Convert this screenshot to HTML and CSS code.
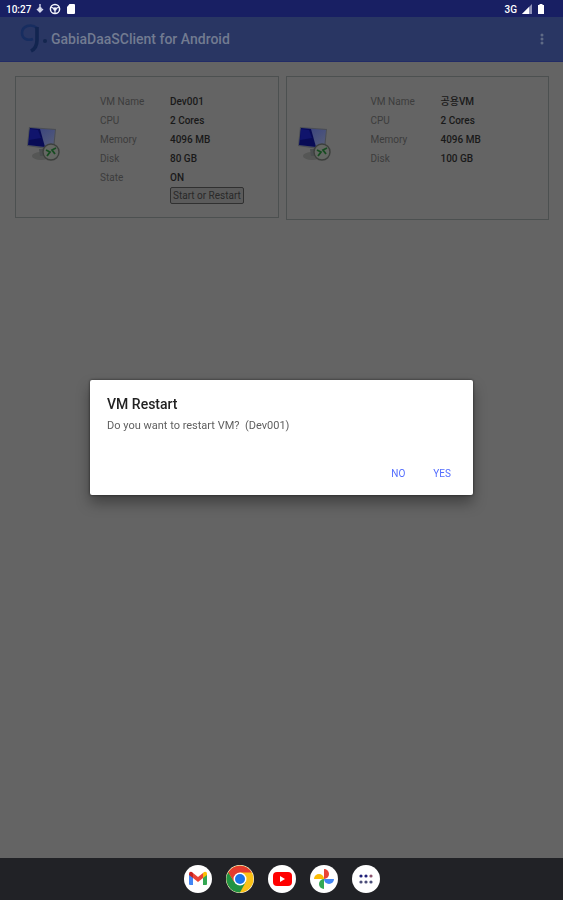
FILE: index.html
```
<!DOCTYPE html>
<html lang="en">

<head>
    <meta charset="UTF-8">
    <title>GabiaDaaSClient for Android</title>
    <meta name="viewport" content="width=device-width, initial-scale=1.0">
    <link rel="stylesheet" href="styles.css">
</head>

<body>

    <!-- shared icon of a virtual machine -->
    <svg class="defs" width="0" height="0" aria-hidden="true">
        <defs>
            <linearGradient id="screen" x1="0" y1="0" x2="1" y2="1">
                <stop offset="0" stop-color="#343e80" />
                <stop offset="1" stop-color="#596078" />
            </linearGradient>
            <symbol id="vm" viewBox="0 0 36 36">
                <ellipse cx="15" cy="30" rx="9" ry="4" fill="#555655" />
                <path d="M13 23h8l1 7h-8z" fill="#4b4e50" />
                <path d="M3 1l27 2-2 21L1 20z" fill="#4a4d54" />
                <path d="M4 2l25 2-2 18L2 19z" fill="url(#screen)" />
                <path d="M4 2l10 1 5 18L2 19z" fill="#080b55" />
                <path d="M4 3l8 1 3 8L3 14z" fill="#10146c" />
                <circle cx="25" cy="26" r="8" fill="#646763" stroke="#3d403d" stroke-width="1.4" />
                <path d="M20 24l4 2-3 4M30 22l-4 2 3 4" fill="none" stroke="#174c21" stroke-width="1.8" />
            </symbol>
        </defs>
    </svg>

    <div class="status-bar">
        <span class="clock">10:27</span>
        <svg width="8" height="10" viewBox="0 0 8 10"><path d="M4 0v7M1 5l3 3 3-3" fill="none" stroke="#d5d8ed" stroke-width="1.4" /><circle cx="4" cy="5" r="2" fill="#d5d8ed" /></svg>
        <svg width="12" height="12" viewBox="0 0 12 12"><circle cx="6" cy="6" r="4.6" fill="none" stroke="#f2f3fa" stroke-width="1.5" /><circle cx="6" cy="6" r="1.8" fill="#f2f3fa" /><path d="M2 4l4 2 4-2M6 6v5" fill="none" stroke="#f2f3fa" stroke-width="1.2" /></svg>
        <svg width="10" height="12" viewBox="0 0 10 12"><path d="M3.500 1H8q1 0 1 1v8q0 1-1 1H2q-1 0-1-1V4z" fill="#fff" /></svg>
        <span class="network">3G</span>
        <svg width="10" height="10" viewBox="0 0 10 10"><path d="M0 10L10 0v10z" fill="#8e91b8" /><path d="M0 10L7 3v7z" fill="#fff" /></svg>
        <svg width="8" height="12" viewBox="0 0 8 12"><path d="M2.500 1h3v1H7v9H1V2h1.500z" fill="#fff" /></svg>
    </div>

    <header class="app-bar">
        <svg class="logo" width="28" height="30" viewBox="0 0 28 30">
            <path d="M17 4C11-1 2 2 2 9c0 6 6 8 11 6" fill="none" stroke="#172d60" stroke-width="2.600" />
            <path d="M17 3v13q0 8-6 11" fill="none" stroke="#122550" stroke-width="3.600" />
            <circle cx="25" cy="17" r="2" fill="#13264f" />
        </svg>
        <h1>GabiaDaaSClient for Android</h1>
        <button class="menu" aria-label="More options">
            <svg width="4" height="14" viewBox="0 0 4 14" fill="#5f6b86"><circle cx="2" cy="3" r="1.500" /><circle cx="2" cy="7" r="1.500" /><circle cx="2" cy="11" r="1.500" /></svg>
        </button>
    </header>

    <main class="machines">
        <section class="card">
            <svg class="vm-icon" width="36" height="36"><use href="#vm" /></svg>
            <dl>
                <dt>VM Name</dt>
                <dd>Dev001</dd>
                <dt>CPU</dt>
                <dd>2 Cores</dd>
                <dt>Memory</dt>
                <dd>4096 MB</dd>
                <dt>Disk</dt>
                <dd>80 GB</dd>
                <dt>State</dt>
                <dd>ON</dd>
                <dd class="action"><button class="btn-restart">Start or Restart</button></dd>
            </dl>
        </section>

        <section class="card card-shared">
            <svg class="vm-icon" width="36" height="36"><use href="#vm" /></svg>
            <dl>
                <dt>VM Name</dt>
                <dd>공용VM</dd>
                <dt>CPU</dt>
                <dd>2 Cores</dd>
                <dt>Memory</dt>
                <dd>4096 MB</dd>
                <dt>Disk</dt>
                <dd>100 GB</dd>
            </dl>
        </section>
    </main>

    <nav class="dock">
        <button aria-label="Gmail">
            <svg width="28" height="28" viewBox="0 0 28 28">
                <path d="M5 9v10q0 1 1 1h3v-8z" fill="#4285f4" />
                <path d="M23 9v10q0 1-1 1h-3v-8z" fill="#34a853" />
                <path d="M5 9q0-3 3-2l1 1v5l-4-3z" fill="#c5221f" />
                <path d="M23 9q0-3-3-2l-1 1v5l4-3z" fill="#fbbc04" />
                <path d="M9 8l5 4 5-4v5l-5 4-5-4z" fill="#ea4335" />
            </svg>
        </button>
        <button aria-label="Chrome">
            <svg width="28" height="28" viewBox="0 0 28 28">
                <circle cx="14" cy="14" r="13.500" fill="#fbc116" />
                <path d="M14 14L8.400 17.200 2.300 7.200A13.500 13.500 0 0 0 14 27.500L19.600 17.200z" fill="#229342" />
                <path d="M2.300 7.200A13.500 13.500 0 0 1 25.700 7.600H14L8.400 17.200z" fill="#e33b2e" />
                <circle cx="14" cy="14" r="6.500" fill="#fff" />
                <circle cx="14" cy="14" r="5" fill="#1a73e8" />
            </svg>
        </button>
        <button aria-label="YouTube">
            <svg width="28" height="28" viewBox="0 0 28 28"><rect x="5" y="7" width="19" height="14" rx="4" fill="#f00" /><path d="M12 11l5 3-5 3z" fill="#fff" /></svg>
        </button>
        <button aria-label="Photos">
            <svg width="28" height="28" viewBox="0 0 28 28">
                <path d="M14 4a5 5 0 0 1 0 10z" fill="#ea4335" />
                <path d="M24 14a5 5 0 0 1-10 0z" fill="#4285f4" />
                <path d="M14 24a5 5 0 0 1 0-10z" fill="#34a853" />
                <path d="M4 14a5 5 0 0 1 10 0z" fill="#fbbc04" />
            </svg>
        </button>
        <button aria-label="All apps">
            <svg width="28" height="28" viewBox="0 0 28 28" fill="#4b4e79"><g fill="#20217a"><circle cx="9" cy="11" r="1.600" /><circle cx="14" cy="11" r="1.600" /></g><circle cx="19" cy="11" r="1.600" fill="#8d5670" /><circle cx="9" cy="17" r="1.600" /><circle cx="14" cy="17" r="1.600" /><circle cx="19" cy="17" r="1.600" /></svg>
        </button>
    </nav>

    <div class="overlay">
        <div class="dialog" role="dialog" aria-labelledby="dialogTitle">
            <h2 id="dialogTitle">VM Restart</h2>
            <p>Do you want to restart VM?&nbsp; (Dev001)</p>
            <div class="buttons">
                <button>NO</button>
                <button>YES</button>
            </div>
        </div>
    </div>

</body>

</html>
```
FILE: styles.css
```
* {
    box-sizing: border-box;
}

body {
    display: flex;
    flex-direction: column;
    min-height: 100vh;
    margin: 0;
    font-family: Roboto, "Noto Sans CJK KR", sans-serif;
    font-size: 10px;
    background: #646464;
}

button {
    padding: 0;
    border: none;
    background: none;
    font-family: inherit;
    cursor: pointer;
}

svg {
    display: block;
}

.defs {
    position: absolute;
}

/* status bar */
.status-bar {
    display: flex;
    align-items: center;
    gap: 5px;
    height: 17px;
    padding: 1px 18px 0 6px;
    background: #181f63;
    color: #fff;
    font-weight: 500;
}

.network {
    margin-left: auto;
}

/* app bar */
.app-bar {
    display: flex;
    align-items: center;
    height: 45px;
    padding: 0 19px 0 20px;
    background: #293663;
    border-bottom: 1px solid #222b66;
}

.app-bar h1 {
    margin: 0 0 0 3px;
    font-size: 14px;
    font-weight: 500;
    color: #727b91;
}

.menu {
    margin-left: auto;
}

/* machine cards */
.machines {
    flex: 1;
    display: grid;
    grid-template-columns: 1fr 1fr;
    align-items: start;
    gap: 7px;
    padding: 14px 14px 0 15px;
}

.card {
    display: flex;
    min-height: 142px;
    padding: 15px 10px 11px;
    border: 1px solid #4c5050;
}

.card-shared {
    min-height: 144px;
}

.vm-icon {
    margin: 34px 38px 0 0;
}

.card dl {
    display: grid;
    grid-template-columns: 70px auto;
    grid-auto-rows: 19px;
    align-content: start;
    margin: 0;
    line-height: 19px;
}

.card dt {
    color: #3c3c3c;
}

.card dd {
    margin: 0;
    color: #191919;
    font-weight: 500;
}

.card .action {
    grid-column: 2;
}

.btn-restart {
    display: block;
    height: 17px;
    padding: 0 2px;
    border: 1px solid #303030;
    border-radius: 2px;
    background: #5b5b5b;
    color: #292929;
    font-size: 10px;
}

/* dock */
.dock {
    display: flex;
    justify-content: center;
    align-items: center;
    gap: 14px;
    height: 42px;
    background: #212226;
}

.dock button {
    width: 28px;
    height: 28px;
    border-radius: 50%;
    background: #fff;
}

/* dialog */
.overlay {
    position: fixed;
    inset: 17px 0 42px;
    display: flex;
    justify-content: center;
    align-items: center;
}

.dialog {
    width: 68%;
    padding: 16px 17px 12px;
    border-radius: 2px;
    background: #fff;
    box-shadow: 0 8px 14px rgba(0, 0, 0, 0.35), 0 0 3px rgba(0, 0, 0, 0.6);
}

.dialog h2 {
    margin: 0;
    font-size: 14px;
    font-weight: 500;
    line-height: 16px;
    color: #222;
}

.dialog p {
    margin: 6px 0 29px;
    font-size: 11px;
    line-height: 16px;
    color: #606060;
}

.buttons {
    display: flex;
    justify-content: flex-end;
    gap: 28px;
    padding-right: 5px;
}

.buttons button {
    height: 20px;
    font-size: 10px;
    font-weight: 400;
    color: #536dfe;
}
```
